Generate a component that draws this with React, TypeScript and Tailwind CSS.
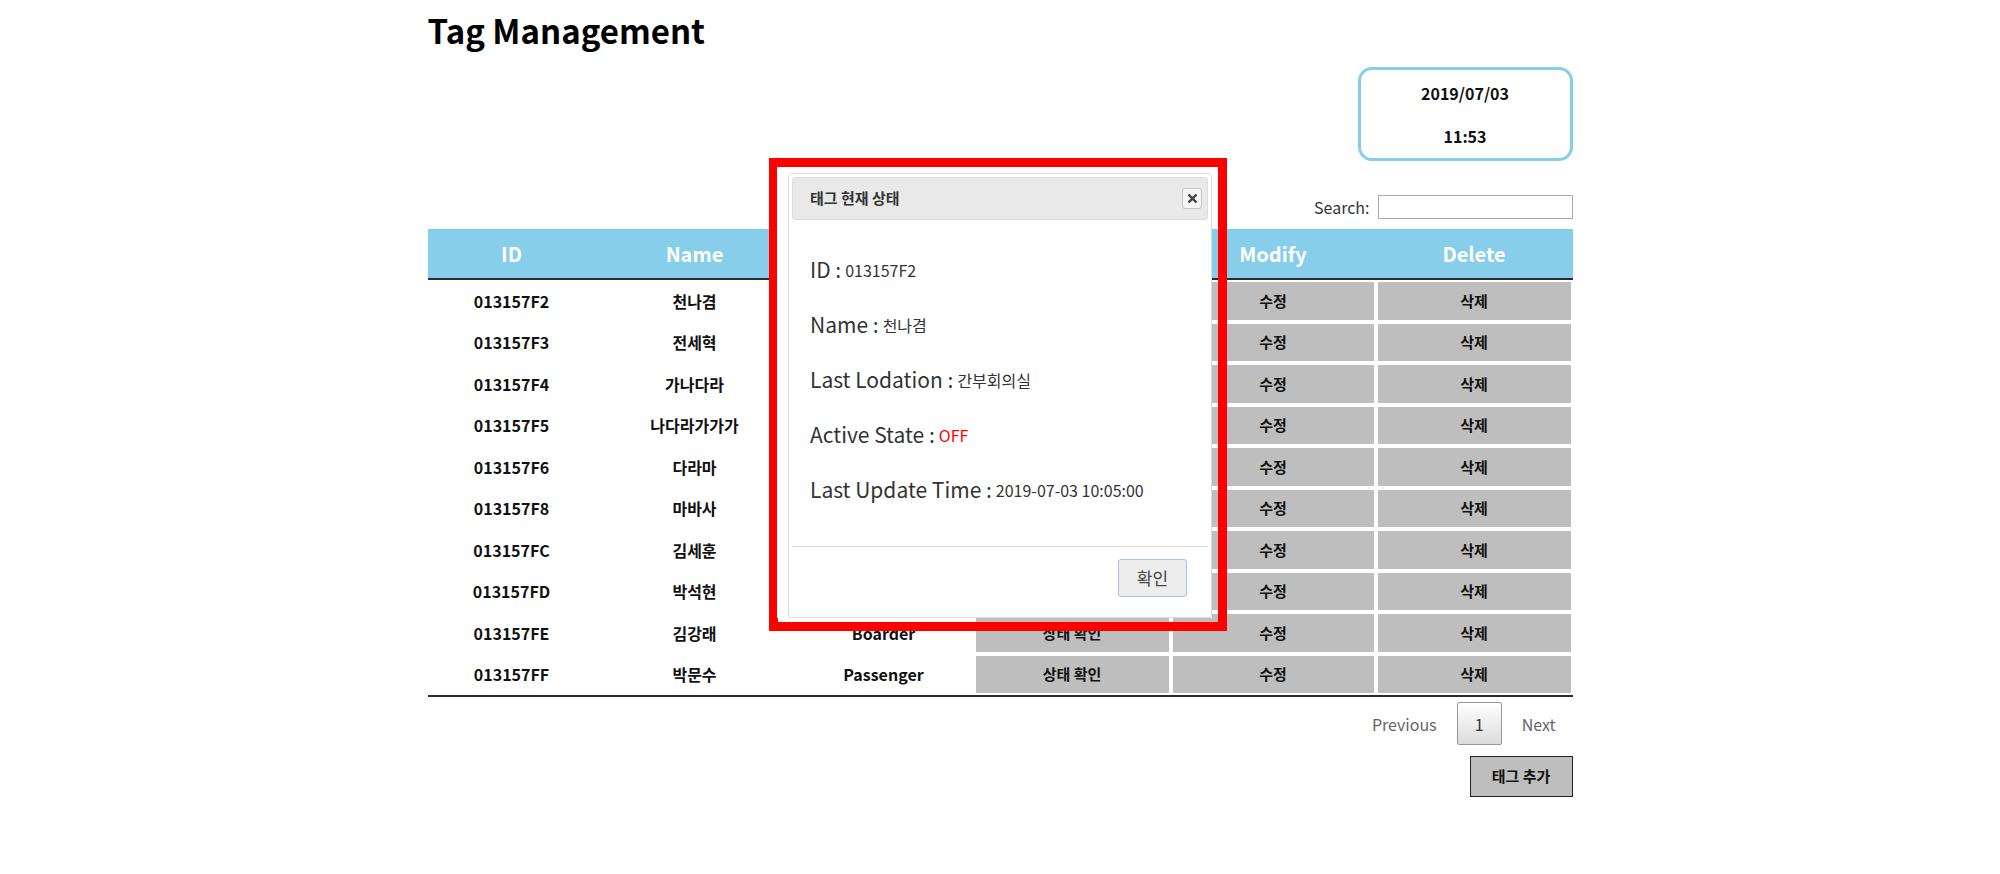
import React from 'react';

interface TagRow {
  id: string;
  name: string;
  type: string;
}

const rows: TagRow[] = [
  { id: '013157F2', name: '천나겸', type: 'Passenger' },
  { id: '013157F3', name: '전세혁', type: 'Passenger' },
  { id: '013157F4', name: '가나다라', type: 'Boarder' },
  { id: '013157F5', name: '나다라가가가', type: 'Passenger' },
  { id: '013157F6', name: '다라마', type: 'Boarder' },
  { id: '013157F8', name: '마바사', type: 'Passenger' },
  { id: '013157FC', name: '김세훈', type: 'Boarder' },
  { id: '013157FD', name: '박석현', type: 'Passenger' },
  { id: '013157FE', name: '김강래', type: 'Boarder' },
  { id: '013157FF', name: '박문수', type: 'Passenger' },
];

const cols = 'grid grid-cols-[168px_198px_180px_197px_205px_197px]';

const GrayButton: React.FC<{ label: string }> = ({ label }) => (
  <div className="px-[2px] h-full">
    <button className="w-full h-full bg-[#bebebe] text-[15px] font-bold text-[#111]">{label}</button>
  </div>
);

const InfoLine: React.FC<{ label: string; children: React.ReactNode }> = ({ label, children }) => (
  <div className="h-[55px] flex items-center">
    <span className="text-[21px] text-[#333]">{label} : </span>
    <span className="text-[16px] text-[#333] ml-[4px]">{children}</span>
  </div>
);

const StatusDialog: React.FC = () => (
  <>
    {/* annotation frame */}
    <div className="absolute left-[769px] top-[158px] w-[458px] h-[473px] border-[9px] border-[#ff0000]" />
    <div className="absolute left-[777px] top-[167px] w-[435px] h-[451px] bg-white pl-[11px] pt-[6px]">
      <div className="h-full border border-[#dddddd] rounded-[3px] bg-white p-[3px] flex flex-col">
        <div className="h-[43px] bg-[#e9e9e9] border border-[#dddddd] rounded-[3px] flex items-center justify-between pl-[17px] pr-[5px]">
          <span className="text-[15px] font-bold text-[#333]">태그 현재 상태</span>
          <button className="w-[20px] h-[21px] border border-[#c5c5c5] bg-[#f6f6f6] rounded-[3px] flex items-center justify-center">
            <svg width="9" height="9" viewBox="0 0 10 10">
              <path d="M1.5 1.5 L8.5 8.5 M8.5 1.5 L1.5 8.5" stroke="#444" strokeWidth="2.6" strokeLinecap="square" />
            </svg>
          </button>
        </div>
        <div className="pl-[18px] pt-[22px] h-[326px]">
          <InfoLine label="ID">013157F2</InfoLine>
          <InfoLine label="Name">천나겸</InfoLine>
          <InfoLine label="Last Lodation">간부회의실</InfoLine>
          <InfoLine label="Active State">
            <span className="text-[#ff0000]">OFF</span>
          </InfoLine>
          <InfoLine label="Last Update Time">2019-07-03 10:05:00</InfoLine>
        </div>
        <div className="border-t border-[#dddddd] flex justify-end pr-[21px] pt-[12px]">
          <button className="w-[69px] h-[38px] border border-[#a6c2ef] bg-[#ededed] rounded-[3px] text-[17px] text-[#454545]">
            확인
          </button>
        </div>
      </div>
    </div>
  </>
);

export default function App() {
  return (
    <div className="relative w-full min-h-screen bg-white font-['Noto_Sans_CJK_KR',sans-serif] text-[#111]">
      <div className="mx-auto w-[1145px]">
        <h1 className="h-[67px] pt-[14px] text-[33px] font-bold leading-none text-black">Tag Management</h1>

        <div className="flex justify-end">
          <div className="w-[215px] h-[94px] border-[3px] border-[#87ceeb] rounded-[14px] flex flex-col items-center justify-center gap-[27px] text-[16px] font-bold leading-none">
            <span>2019/07/03</span>
            <span>11:53</span>
          </div>
        </div>

        <div className="flex justify-end items-center gap-[8px] mt-[34px] h-[24px]">
          <span className="text-[16px] text-[#333]">Search:</span>
          <input className="w-[195px] h-[24px] border border-[#aaaaaa] outline-none" />
        </div>

        <div className="mt-[10px]">
          <div className={`${cols} h-[51px] bg-[#87ceeb] border-b-2 border-[#2b2b2b] text-white text-[20px] font-bold`}>
            {['ID', 'Name', 'Type', 'State', 'Modify', 'Delete'].map((h) => (
              <div key={h} className="flex items-center justify-center">{h}</div>
            ))}
          </div>
          {rows.map((r) => (
            <div key={r.id} className={`${cols} h-[41.5px] py-[2px] text-[16px] font-bold`}>
              <div className="flex items-center justify-center">{r.id}</div>
              <div className="flex items-center justify-center">{r.name}</div>
              <div className="flex items-center justify-center">{r.type}</div>
              <GrayButton label="상태 확인" />
              <GrayButton label="수정" />
              <GrayButton label="삭제" />
            </div>
          ))}
          <div className="border-t-2 border-[#2b2b2b]" />
        </div>

        <div className="flex justify-end items-center gap-[4px] mt-[5px] h-[43px] text-[16px] text-[#666]">
          <span className="px-[16px]">Previous</span>
          <span className="w-[45px] h-[43px] flex items-center justify-center border border-[#979797] rounded-[2px] bg-linear-to-b from-white to-[#dcdcdc] text-[#333]">
            1
          </span>
          <span className="pl-[16px] pr-[17px]">Next</span>
        </div>

        <div className="flex justify-end mt-[11px]">
          <button className="w-[103px] h-[41px] bg-[#bebebe] border-[1.5px] border-[#222] text-[15px] font-bold text-[#111]">
            태그 추가
          </button>
        </div>
      </div>

      <StatusDialog />
    </div>
  );
}
